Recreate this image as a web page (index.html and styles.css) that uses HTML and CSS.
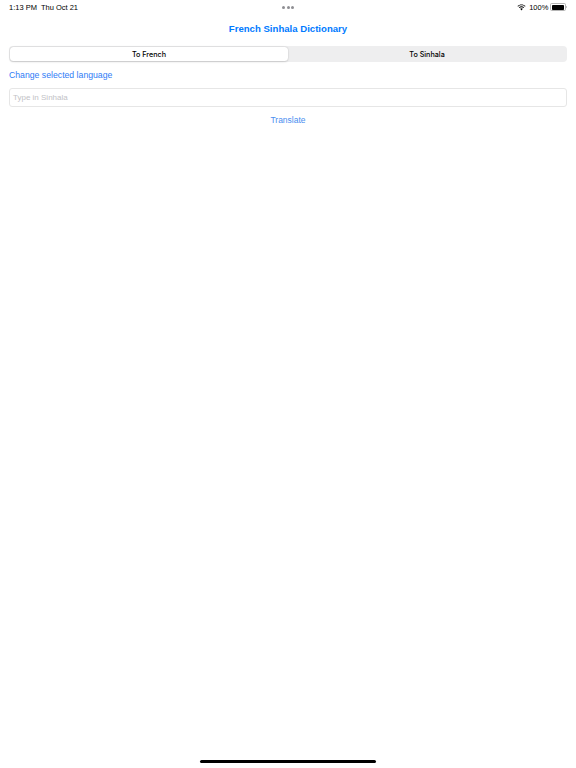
FILE: index.html
```html
<!DOCTYPE html>
<html>
<head>
<meta charset="utf-8">
<link rel="stylesheet" href="styles.css">
</head>
<body>
<div class="screen">
  <div class="status">
    <div class="status-left"><span>1:13 PM</span><span class="date">Thu Oct 21</span></div>
    <div class="dots"><i></i><i></i><i></i></div>
    <div class="status-right">
      <svg class="wifi" width="9" height="7" viewBox="0 0 18 13"><path d="M9 2.2c2.6 0 5 1 6.8 2.7l1.3-1.3C15 1.5 12.1.3 9 .3S3 1.5.9 3.6l1.3 1.3C4 3.2 6.4 2.2 9 2.2z" fill="#000"/><path d="M9 6.1c1.5 0 2.9.6 4 1.6l1.3-1.3C12.9 5 11 4.2 9 4.2S5.1 5 3.7 6.4L5 7.7c1.1-1 2.5-1.6 4-1.6z" fill="#000"/><path d="M9 8c-1 0-1.9.4-2.6 1.1L9 12.7l2.6-3.6C10.9 8.4 10 8 9 8z" fill="#000"/></svg>
      <span class="pct">100%</span>
      <span class="battery"><span class="level"></span></span><span class="nub"></span>
    </div>
  </div>
  <div class="title">French Sinhala Dictionary</div>
  <div class="content">
    <div class="segmented">
      <div class="seg active">To French</div>
      <div class="seg">To Sinhala</div>
    </div>
    <div class="change">Change selected language</div>
    <div class="field">Type in Sinhala</div>
    <div class="translate">Translate</div>
  </div>
  <div class="home"></div>
</div>
</body>
</html>
```
FILE: styles.css
```css
html, body { margin: 0; padding: 0; background: #fff; }
body { font-family: "Liberation Sans", Arial, sans-serif; color: #000; }
.screen { width: 576px; height: 768px; position: relative; overflow: hidden; background: #fff; }
.status { height: 14px; display: flex; align-items: center; justify-content: space-between; padding: 0 9px; font-size: 7.5px; position: relative; }
.status-left { display: flex; gap: 4px; }
.dots { position: absolute; left: 282px; top: 6px; display: flex; gap: 1.5px; }
.dots i { width: 3px; height: 3px; border-radius: 50%; background: #8e8e93; display: block; }
.status-right { display: flex; align-items: center; }
.wifi { margin-right: 3px; }
.pct { margin-right: 2px; }
.battery { width: 12px; height: 5px; border: 0.6px solid #b5b5b5; border-radius: 1.6px; padding: 0.6px; display: flex; }
.battery .level { flex: 1; background: #000; border-radius: 0.8px; }
.nub { width: 1px; height: 2.5px; background: #b5b5b5; border-radius: 0 1px 1px 0; margin-left: 0.5px; }
.title { text-align: center; color: #007aff; font-weight: bold; font-size: 9.6px; margin-top: 9px; height: 12px; line-height: 12px; }
.content { padding: 0 9px; }
.segmented { margin-top: 11px; height: 16px; background: #eeeeef; border-radius: 4px; display: flex; padding: 1px; box-sizing: border-box; }
.seg { flex: 1; display: flex; align-items: center; justify-content: center; font-family: Inter, "Liberation Sans", sans-serif; font-size: 7.2px; font-weight: 500; border-radius: 3.5px; color: #000; }
.seg.active { background: #fff; box-shadow: 0 0.5px 2px rgba(0,0,0,0.15), 0 0 0 0.5px rgba(0,0,0,0.04); }
.change { color: #2f7cf6; font-size: 8.7px; margin-top: 8px; height: 11px; line-height: 11px; }
.field { margin-top: 7px; height: 19px; border: 1px solid #e6e6e6; border-radius: 3px; box-sizing: border-box; font-size: 8px; color: #c2c2c6; padding-left: 3px; display: flex; align-items: center; }
.translate { text-align: center; color: #4a8ef0; font-size: 8.5px; margin-top: 8px; }
.home { position: absolute; left: 200px; top: 760px; width: 176px; height: 3px; border-radius: 2px; background: #000; }
```
